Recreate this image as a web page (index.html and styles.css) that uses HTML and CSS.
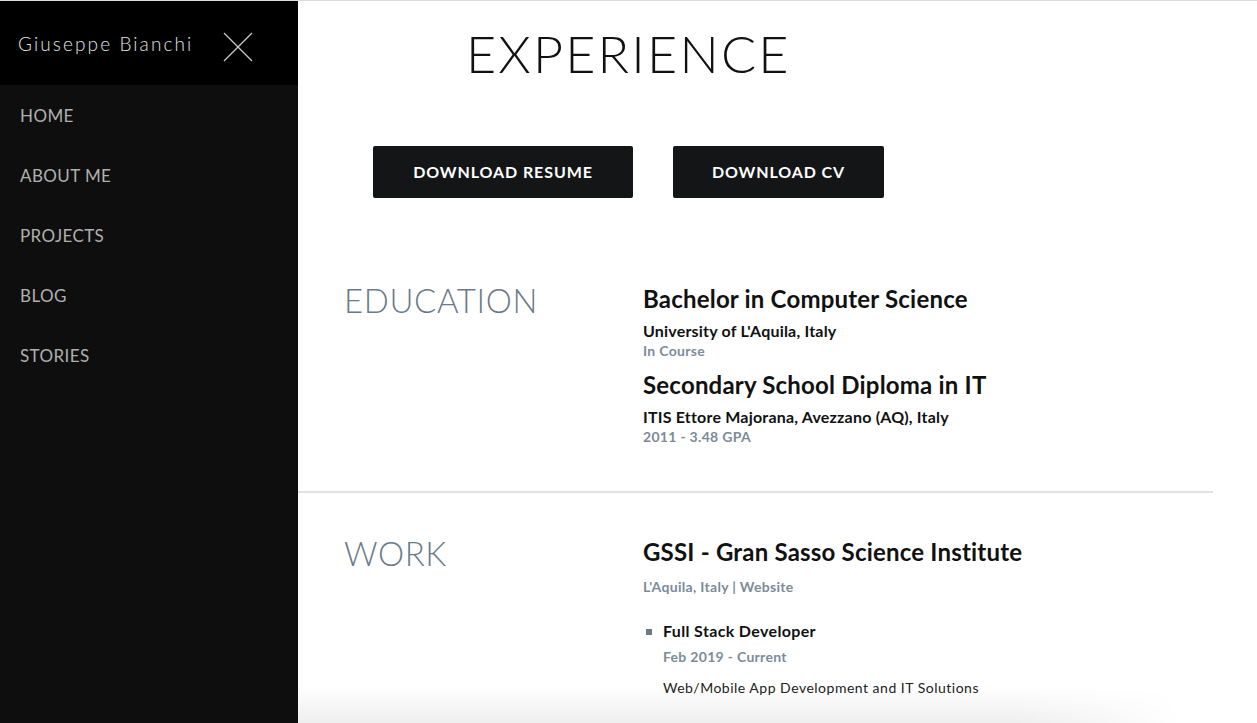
FILE: index.html
```html
<!DOCTYPE html>
<html lang="en">
<head>
<meta charset="utf-8">
<title>Giuseppe Bianchi - Experience</title>
<link rel="stylesheet" href="styles.css">
</head>
<body>
<div class="layout">
  <aside class="sidebar">
    <div class="side-head">
      <span class="brand">Giuseppe Bianchi</span>
      <svg class="close" width="30" height="30" viewBox="0 0 30 30" aria-hidden="true">
        <line x1="1" y1="1" x2="29" y2="29" stroke="#c8c8c8" stroke-width="1.3"/>
        <line x1="29" y1="1" x2="1" y2="29" stroke="#c8c8c8" stroke-width="1.3"/>
      </svg>
    </div>
    <nav class="nav">
      <a class="nav-link" href="#">HOME</a>
      <a class="nav-link" href="#">ABOUT ME</a>
      <a class="nav-link" href="#">PROJECTS</a>
      <a class="nav-link" href="#">BLOG</a>
      <a class="nav-link" href="#">STORIES</a>
    </nav>
  </aside>
  <main class="main">
    <h1 class="title">EXPERIENCE</h1>
    <div class="buttons">
      <a class="btn btn-resume" href="#">DOWNLOAD RESUME</a>
      <a class="btn btn-cv" href="#">DOWNLOAD CV</a>
    </div>
    <section class="block block-edu">
      <h2 class="block-title">EDUCATION</h2>
      <div class="block-body">
        <div class="entry">
          <h3 class="entry-title">Bachelor in Computer Science</h3>
          <div class="entry-sub">University of L'Aquila, Italy</div>
          <div class="entry-meta">In Course</div>
        </div>
        <div class="entry">
          <h3 class="entry-title">Secondary School Diploma in IT</h3>
          <div class="entry-sub">ITIS Ettore Majorana, Avezzano (AQ), Italy</div>
          <div class="entry-meta">2011 - 3.48 GPA</div>
        </div>
      </div>
    </section>
    <section class="block block-work">
      <h2 class="block-title">WORK</h2>
      <div class="block-body">
        <h3 class="entry-title">GSSI - Gran Sasso Science Institute</h3>
        <div class="entry-meta work-loc">L'Aquila, Italy | Website</div>
        <ul class="roles">
          <li class="role">
            <div class="role-title">Full Stack Developer</div>
            <div class="entry-meta role-date">Feb 2019 - Current</div>
            <div class="role-desc">Web/Mobile App Development and IT Solutions</div>
          </li>
        </ul>
      </div>
    </section>
  </main>
</div>
<div class="bottom-shade"></div>
</body>
</html>
```

FILE: styles.css
```css
html, body {
  margin: 0;
  padding: 0;
  height: 100%;
  overflow: hidden;
}
body {
  border-top: 1px solid #dcdcdc;
  box-sizing: border-box;
  font-family: "Lato", "Open Sans", sans-serif;
  background: #fff;
  color: #111;
}
.layout {
  display: flex;
  height: 722px;
}
.sidebar {
  width: 298px;
  flex: none;
  background: #0e0e0e;
  display: flex;
  flex-direction: column;
}
.side-head {
  height: 84px;
  background: #000;
  display: flex;
  align-items: center;
  padding-left: 18px;
  gap: 30px;
}
.brand {
  color: #e2e2e2;
  font-size: 19px;
  font-weight: 300;
  letter-spacing: 2.1px;
}
.close {
  display: block;
  margin-top: 7px;
}
.nav {
  display: flex;
  flex-direction: column;
  padding-top: 20px;
}
.nav-link {
  color: #b0b0b0;
  text-decoration: none;
  font-size: 17px;
  line-height: 22px;
  height: 60px;
  padding-left: 20px;
  letter-spacing: 0.4px;
}
.main {
  flex: 1;
  padding-left: 46px;
  margin-right: 44px;
}
.title {
  margin: 24px 0 0 122px;
  font-size: 52px;
  line-height: 56px;
  font-weight: 300;
  letter-spacing: 2.2px;
  color: #111;
}
.buttons {
  display: flex;
  gap: 40px;
  margin: 65px 0 0 29px;
}
.btn {
  display: flex;
  align-items: center;
  justify-content: center;
  height: 52px;
  background: #141517;
  color: #fff;
  border-radius: 2px;
  text-decoration: none;
  font-size: 16px;
  font-weight: 700;
  letter-spacing: 0.9px;
  padding-bottom: 2px;
  box-sizing: border-box;
}
.btn-resume { width: 260px; }
.btn-cv { width: 211px; }
.block {
  display: flex;
  margin-left: -46px;
  padding-left: 46px;
}
.block-edu {
  margin-top: 84px;
  padding-bottom: 44px;
  border-bottom: 2px solid #e2e2e2;
}
.block-work {
  padding-top: 42px;
}
.block-title {
  width: 299px;
  flex: none;
  margin: -2px 0 0;
  font-size: 33px;
  line-height: 40px;
  font-weight: 300;
  color: #6b7a8a;
  letter-spacing: 0.6px;
}
.block-body {
  flex: 1;
  padding-top: 2px;
}
.entry + .entry {
  margin-top: 9px;
}
.entry-title {
  margin: 0;
  font-size: 24px;
  line-height: 30px;
  font-weight: 700;
  color: #111;
  letter-spacing: 0.2px;
}
.entry-sub {
  font-size: 16px;
  line-height: 20px;
  font-weight: 700;
  color: #111;
  margin-top: 7px;
  letter-spacing: 0.2px;
}
.entry-meta {
  font-size: 14px;
  line-height: 20px;
  font-weight: 700;
  color: #7c8b9a;
  letter-spacing: 0.3px;
}
.work-loc {
  margin-top: 10px;
}
.roles {
  margin: 24px 0 0;
  padding: 0 0 0 20px;
  list-style: none;
}
.role {
  position: relative;
}
.role::before {
  content: "";
  position: absolute;
  left: -17px;
  top: 8px;
  width: 6px;
  height: 6px;
  background: #6b7a8a;
}
.role-title {
  font-size: 16px;
  line-height: 20px;
  font-weight: 700;
  color: #111;
  letter-spacing: 0.35px;
}
.role-date {
  margin-top: 6px;
}
.role-desc {
  margin-top: 11px;
  font-size: 14px;
  line-height: 20px;
  color: #222;
  letter-spacing: 0.5px;
}
.bottom-shade {
  position: fixed;
  left: 298px;
  right: 0;
  bottom: 0;
  height: 36px;
  background: linear-gradient(to bottom, rgba(0,0,0,0), rgba(0,0,0,0.065));
  -webkit-mask-image: linear-gradient(to right, #000 75%, transparent 92%);
  mask-image: linear-gradient(to right, #000 75%, transparent 92%);
  pointer-events: none;
}
```
